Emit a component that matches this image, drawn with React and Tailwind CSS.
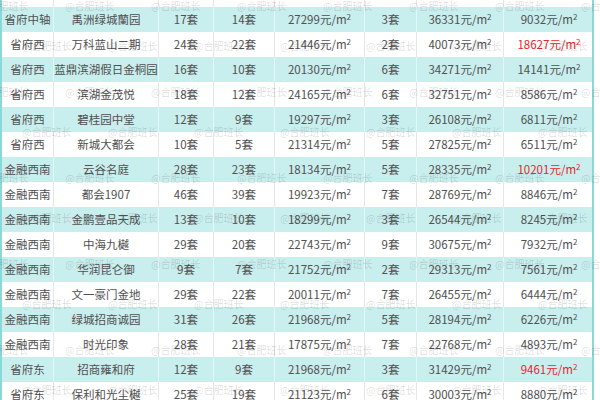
import React from 'react';

const rows = [
  ['省府中轴', '禹洲绿城蘭园', '17套', '14套', '27299', '3套', '36331', '9032'],
  ['省府西', '万科蓝山二期', '24套', '22套', '21446', '2套', '40073', '18627', true],
  ['省府西', '蓝鼎滨湖假日金桐园', '16套', '10套', '20130', '6套', '34271', '14141'],
  ['省府西', '滨湖金茂悦', '18套', '12套', '24165', '6套', '32751', '8586'],
  ['省府西', '碧桂园中堂', '12套', '9套', '19297', '3套', '26108', '6811'],
  ['省府西', '新城大都会', '10套', '5套', '21314', '5套', '27825', '6511'],
  ['金融西南', '云谷名庭', '28套', '23套', '18134', '5套', '28335', '10201', true],
  ['金融西南', '都会1907', '46套', '39套', '19923', '7套', '28769', '8846'],
  ['金融西南', '金鹏壹品天成', '13套', '10套', '18299', '3套', '26544', '8245'],
  ['金融西南', '中海九樾', '29套', '20套', '22743', '9套', '30675', '7932'],
  ['金融西南', '华润昆仑御', '9套', '7套', '21752', '2套', '29313', '7561'],
  ['金融西南', '文一豪门金地', '29套', '22套', '20011', '7套', '26455', '6444'],
  ['金融西南', '绿城招商诚园', '31套', '26套', '21968', '5套', '28194', '6226'],
  ['金融西南', '时光印象', '28套', '21套', '17875', '7套', '22768', '4893'],
  ['省府东', '招商雍和府', '12套', '9套', '21968', '3套', '31429', '9461', true],
  ['省府东', '保利和光尘樾', '25套', '19套', '21123', '6套', '30003', '8880'],
];

const cols = 'grid grid-cols-[52px_105px_55px_61px_90px_52px_87px_90px]';

const Price = ({ v, red }) => (
  <span className={red ? 'text-[#e5252c]' : ''}>
    {v}元/m<span className="text-[8px] relative -top-[4px]">2</span>
  </span>
);

const Cell = ({ children, teal, last }) => (
  <div
    className={`flex items-center justify-center whitespace-nowrap ${last ? '' : 'border-r'} ${
      teal ? 'border-[#e4f7f7]' : 'border-[#e6e6e6]'
    }`}
  >
    {children}
  </div>
);

const Row = ({ r, teal }) => (
  <div className={`${cols} h-[25px] ${teal ? 'bg-[#c9eeee]' : 'bg-white'}`}>
    <Cell teal={teal}>{r[0]}</Cell>
    <Cell teal={teal}>{r[1]}</Cell>
    <Cell teal={teal}>{r[2]}</Cell>
    <Cell teal={teal}>{r[3]}</Cell>
    <Cell teal={teal}><Price v={r[4]} /></Cell>
    <Cell teal={teal}>{r[5]}</Cell>
    <Cell teal={teal}><Price v={r[6]} /></Cell>
    <Cell teal={teal} last><Price v={r[7]} red={r[8]} /></Cell>
  </div>
);

// watermark grid: two interleaved rows, 86px apart
const marks = [];
for (let j = 0; j < 10; j++) {
  const y = j % 2 === 0 ? -2 + (j / 2) * 86 : 38 + ((j - 1) / 2) * 86;
  const x0 = j % 2 === 0 ? -21 : 22;
  for (let i = 0; i < 8; i++) marks.push({ x: x0 + i * 86, y });
}

export default function App() {
  return (
    <div
      className="relative w-[600px] h-[400px] overflow-hidden bg-white text-[11.5px] text-[#505050]"
      style={{ fontFamily: '"Noto Sans CJK SC", "Noto Sans", sans-serif' }}
    >
      <div className="w-[594px] border-l-2 border-r-2 border-[#8ad9d9]">
        <div className={`${cols} h-[7px] bg-white`}>
          {[0, 1, 2, 3, 4, 5, 6].map((i) => (
            <div key={i} className="border-r border-[#e6e6e6]" />
          ))}
          <div />
        </div>
        {rows.map((r, i) => (
          <Row key={i} r={r} teal={i % 2 === 0} />
        ))}
      </div>
      <div className="absolute inset-0 pointer-events-none">
        {marks.map((m, i) => (
          <span
            key={i}
            className="absolute text-[10px] text-black/15 whitespace-nowrap"
            style={{ left: m.x, top: m.y }}
          >
            @合肥班长
          </span>
        ))}
      </div>
    </div>
  );
}
